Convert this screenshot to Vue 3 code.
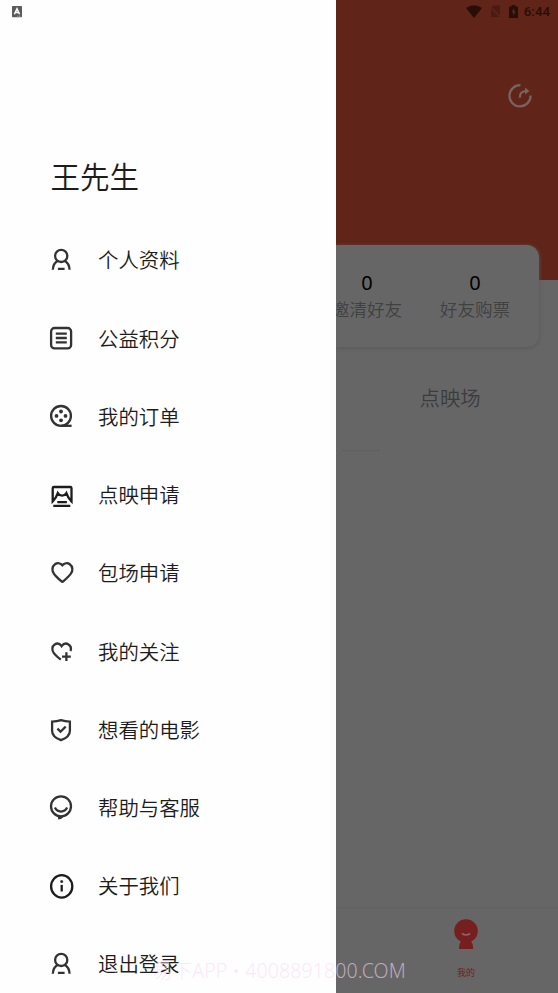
<script setup>
const menu = [
  { label: '个人资料', icon: 'user' },
  { label: '公益积分', icon: 'list' },
  { label: '我的订单', icon: 'reel' },
  { label: '点映申请', icon: 'screen' },
  { label: '包场申请', icon: 'heart' },
  { label: '我的关注', icon: 'follow' },
  { label: '想看的电影', icon: 'shield' },
  { label: '帮助与客服', icon: 'smile' },
  { label: '关于我们', icon: 'info' },
  { label: '退出登录', icon: 'user' }
]
const stats = [
  { value: 0, label: '邀清好友' },
  { value: 0, label: '好友购票' }
]
</script>

<template>
  <div class="screen">
    <aside class="drawer">
      <div class="drawer-status">
        <svg width="10" height="12" viewBox="0 0 10 12">
          <rect width="10" height="11.3" rx="0.8" fill="#5b5b5b" />
          <path d="M2.4 8.3 5 2.8 7.6 8.3M3.5 6.6h3" fill="none" stroke="#fff" stroke-width="1.5" />
          <path d="M5.2 10.2h3.6" stroke="#ccc" stroke-width="0.7" stroke-dasharray="1.2 0.5" />
        </svg>
      </div>
      <h1 class="name">王先生</h1>
      <ul class="menu">
        <li v-for="item in menu" :key="item.label" class="item">
          <svg class="icon" width="28" height="28" viewBox="0 0 28 28">
            <g v-if="item.icon === 'user'">
              <circle cx="13.2" cy="8.900" r="6.100" />
              <path d="M4.800 22.800c.2-4.200 1.900-7.400 5.400-9M21.600 22.800c-.2-4.200-1.900-7.400-5.400-9M9.900 21.800h6.700" />
            </g>
            <g v-else-if="item.icon === 'list'">
              <rect x="3.1" y="3" width="20" height="20.400" rx="3.5" />
              <path d="M7.8 8.600h11M7.800 13h11M7.800 17.400h11" />
            </g>
            <g v-else-if="item.icon === 'reel'">
              <circle cx="13" cy="12.900" r="9.900" />
              <path d="M13 22.800h10.600" />
              <g class="solid">
                <circle cx="13" cy="8.500" r="1.900" /><circle cx="8.500" cy="12.900" r="1.900" />
                <circle cx="17.500" cy="12.900" r="1.900" /><circle cx="13" cy="17.300" r="1.900" />
              </g>
            </g>
            <g v-else-if="item.icon === 'screen'" class="dark">
              <path d="M4.700 20.500V7.300q0-1.300 1.300-1.300h16.200q1.300 0 1.300 1.300v13.200Q20 17 18.400 12.200q-1.600 2.500-4.300 2.500t-4.300-2.500Q8.200 17 4.700 20.500z" />
              <path d="M9.300 21.100h9.600M5.300 24.900h17" />
            </g>
            <g v-else-if="item.icon === 'heart'">
              <path transform="translate(0 .6)" d="M14.400 5.700C12.600 3.500 9.400 2.900 7 4.600c-3.200 2.300-3.300 6.800-.9 9.700 2 2.500 4.700 5 7.200 7.300q1.100 1 2.200 0c2.500-2.300 5.200-4.800 7.200-7.300 2.400-2.900 2.300-7.400-.9-9.700-2.400-1.700-5.600-1.100-7.400 1.100z" />
            </g>
            <g v-else-if="item.icon === 'follow'">
              <path d="M12.800 21.700C10 19.400 7.700 17.500 5.900 15.100 3.600 12.100 3.900 8.300 6.700 6.500c2.300-1.500 5.100-.8 6.900 1.700 1.800-2.500 4.600-3.200 6.900-1.700 2.200 1.400 2.900 4 2 6.500M18.400 14.300v8.800M14 18.700h8.800" />
            </g>
            <g v-else-if="item.icon === 'shield'">
              <path d="M4.100 5.600Q9 5.500 13 4.100q4 1.400 8.900 1.500v9.100q0 6.200-8.900 9.500Q4.100 20.900 4.100 14.700z" />
              <path d="m9.400 12.700 3.100 3 5.200-5.100" />
            </g>
            <g v-else-if="item.icon === 'smile'">
              <circle cx="13" cy="12.300" r="10" />
              <path d="M6.900 13.600c2.500 5.300 9.700 5.300 12.200 0" />
              <path class="solid" d="m9.500 21.600.8 3.800q3.700-.4 5.700-3z" />
            </g>
            <g v-else class="dark">
              <ellipse cx="13.700" cy="14.400" rx="10.600" ry="11.200" />
              <path d="M13.700 12.900v6.600" />
              <circle class="solid" cx="13.700" cy="9.500" r="1.500" />
            </g>
          </svg>
          <span>{{ item.label }}</span>
        </li>
      </ul>
    </aside>

    <main class="page">
      <header class="hero">
        <div class="status">
          <svg width="16" height="13" viewBox="0 0 16 13"><path d="M0 3Q8-2.500 16 3L8 13z" fill="#260e09" /></svg>
          <svg width="11" height="13" viewBox="0 0 11 13">
            <path d="M3.500.500H10V12H1V3z" fill="#491c13" /><path d="m0 1.500 11 11" stroke="#602418" stroke-width="1.500" />
          </svg>
          <svg width="9" height="13" viewBox="0 0 9 13">
            <path d="M0 1.500h2.600V0h3.800v1.500H9V13H0z" fill="#260e09" /><path d="M5.200 3 2.500 7.300h1.600V11l2.700-4.700H5.200z" fill="#602418" />
          </svg>
          <time>6:44</time>
        </div>
        <svg class="share" width="26" height="26" viewBox="0 0 26 26">
          <path d="M13.500 2.200A10.600 10.600 0 1 0 23.600 12.500M12.800 14.800c-.2-4.500 2-6.700 6.500-6.700" fill="none" stroke="#77635f" stroke-width="2.300" />
          <path d="M18 4.600 22.500 8 18 11.400z" fill="#77635f" />
        </svg>
      </header>
      <section class="card">
        <div v-for="s in stats" :key="s.label" class="stat">
          <b>{{ s.value }}</b>
          <span>{{ s.label }}</span>
        </div>
      </section>
      <div class="tab">点映场</div>
      <div class="rule"></div>
      <nav class="bottom">
        <svg width="26" height="31" viewBox="0 0 26 31">
          <circle cx="13" cy="12" r="11.800" fill="#751f1f" />
          <path d="M9 21h8q3.200 3 3.200 9H6q0-6 3-9z" fill="#751f1f" />
          <path d="M9 14.500q4 3 8 0" fill="none" stroke="#8d6463" stroke-width="1.600" />
        </svg>
        <span>我的</span>
      </nav>
    </main>
    <div class="watermark">易下APP • 4008891800.COM</div>
  </div>
</template>

<style>
body {
  margin: 0;
}
</style>

<style scoped>
.screen {
  position: relative;
  display: flex;
  width: 558px;
  height: 993px;
  overflow: hidden;
  font-family: "Noto Sans", "Noto Sans CJK SC", sans-serif;
  font-weight: 350;
}
.drawer {
  width: 336px;
  height: 993px;
  flex: none;
  overflow: hidden;
  background: #fefefe;
  color: #1c1c1c;
  font-family: "Noto Sans CJK SC", sans-serif;
}
.drawer-status {
  display: flex;
  height: 145px;
  padding: 5.500px 0 0 12px;
  box-sizing: border-box;
}
.name {
  margin: 0;
  height: 60px;
  padding-left: 50.500px;
  font-size: 29.500px;
  line-height: 60px;
  font-weight: 350;
}
.menu {
  margin: 16px 0 0;
  padding: 0;
  list-style: none;
}
.item {
  display: flex;
  align-items: center;
  gap: 22px;
  height: 78.220px;
  padding-left: 48px;
  font-size: 20.400px;
  line-height: 30px;
}
.item span {
  padding-bottom: 1.400px;
}
.icon {
  flex: none;
  margin-top: 1px;
  fill: none;
  stroke: #333;
  stroke-width: 2.300;
}
.icon .solid {
  fill: #333;
  stroke: none;
}
.icon .dark {
  stroke: #1c1c1c;
}
.page {
  display: flex;
  flex-direction: column;
  width: 222px;
  height: 993px;
  overflow: hidden;
  background: #666;
}
.hero {
  display: flex;
  flex-direction: column;
  flex: none;
  height: 280px;
  background: #602418;
}
.status {
  display: flex;
  align-items: center;
  justify-content: flex-end;
  height: 22px;
  padding-right: 8px;
  color: #260e09;
}
.status svg {
  margin-right: 8px;
}
.status svg:nth-of-type(3) {
  margin-right: 6px;
}
.status time {
  font: 500 13.300px/22px Roboto, sans-serif;
  padding-top: 1px;
}
.share {
  align-self: flex-end;
  margin: 61px 25px 0 0;
}
.card {
  display: flex;
  justify-content: flex-end;
  flex: none;
  width: 203px;
  height: 102px;
  margin-top: -35px;
  padding: 24px 10px 0 0;
  box-sizing: border-box;
  border-radius: 0 12px 12px 0;
  background: #666;
  box-shadow: 0 1px 4px #5d5655;
}
.stat {
  display: flex;
  flex: none;
  flex-direction: column;
  align-items: center;
  width: 108px;
}
.stat b {
  color: #000;
  font-size: 20px;
  font-weight: 400;
  line-height: 27px;
}
.stat span {
  color: #414141;
  font-size: 17.600px;
  line-height: 26px;
}
.tab {
  margin: 35px 0 0 83.500px;
  color: #3c3c3c;
  font-size: 20.400px;
  line-height: 32px;
}
.rule {
  width: 38px;
  height: 1px;
  margin: 35.500px 0 0 6px;
  background: #606060;
}
.bottom {
  display: flex;
  flex-direction: column;
  align-items: center;
  height: 86px;
  margin-top: auto;
  padding: 11px 0 0 38px;
  box-sizing: border-box;
  border-top: 1px solid #616161;
}
.bottom span {
  margin-top: 16px;
  color: #701818;
  font-size: 9px;
  line-height: 14px;
}
.watermark {
  position: absolute;
  left: 153px;
  top: 957px;
  color: rgba(250, 215, 248, 0.600);
  font-size: 19.500px;
  font-weight: 300;
  letter-spacing: 0.120px;
  line-height: 28px;
  white-space: nowrap;
}
</style>
